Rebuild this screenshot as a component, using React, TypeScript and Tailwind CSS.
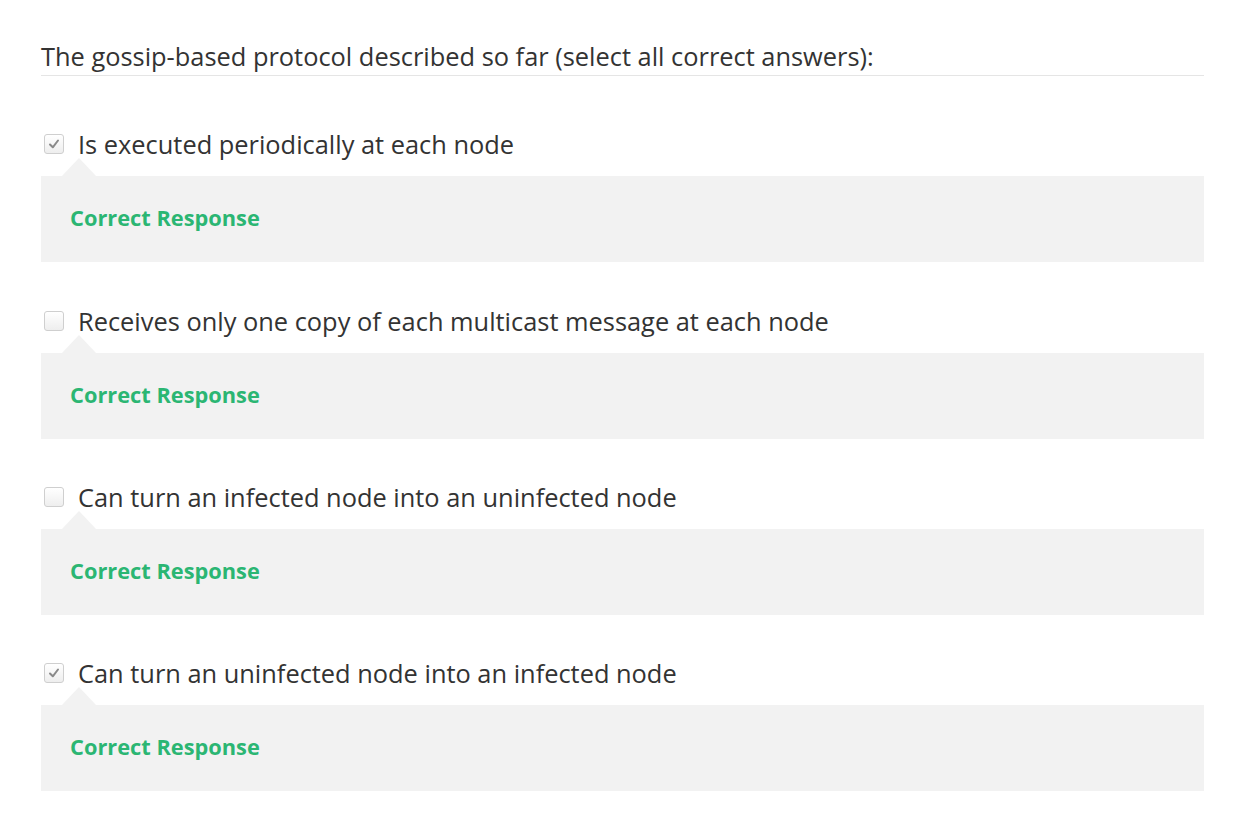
import React from 'react';

const options = [
  { label: 'Is executed periodically at each node', checked: true },
  { label: 'Receives only one copy of each multicast message at each node', checked: false },
  { label: 'Can turn an infected node into an uninfected node', checked: false },
  { label: 'Can turn an uninfected node into an infected node', checked: true },
];

const Checkbox: React.FC<{ checked: boolean }> = ({ checked }) => (
  <span className="ml-[3px] flex h-[20px] w-[20px] shrink-0 items-center justify-center rounded-[3px] border border-[#cfcfcf] bg-gradient-to-b from-white to-[#eeeeee]">
    {checked && (
      <svg width="14" height="14" viewBox="0 0 14 14">
        <path d="M3 7.5 L5.8 10.3 L11 3.5" fill="none" stroke="#8a8a8a" strokeWidth="2" strokeLinecap="round" strokeLinejoin="round" />
      </svg>
    )}
  </span>
);

export default function App() {
  return (
    <div className="min-h-screen bg-white px-[41px] pb-[23px] text-[#333] [font-family:'Open_Sans',sans-serif]" style={{ width: 1238 }}>
      <div className="w-[1163px]">
        <div className="border-b border-[#e5e5e5] pt-[39px] pb-[2px] text-[25.4px] leading-[34px]">
          The gossip-based protocol described so far (select all correct answers):
        </div>

        {options.map((opt, i) => (
          <div key={i} className={i === 0 ? 'mt-[51px]' : i === 1 ? 'mt-[42px]' : 'mt-[41px]'}>
            <div className="flex items-center gap-[14px] text-[25.4px] leading-[34px]">
              <Checkbox checked={opt.checked} />
              <span>{opt.label}</span>
            </div>
            <div className="relative mt-[15px] flex h-[86px] items-center bg-[#f2f2f2] pb-[2px] pl-[29px]">
              <span className="absolute -top-[18px] left-[21px] h-0 w-0 border-x-[17px] border-b-[18px] border-x-transparent border-b-[#f2f2f2]" />
              <span className="text-[21.8px] font-bold text-[#2bb673]">Correct Response</span>
            </div>
          </div>
        ))}
      </div>
    </div>
  );
}
